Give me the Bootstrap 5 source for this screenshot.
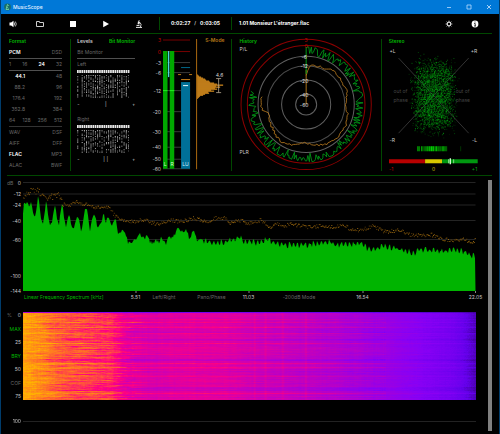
<!DOCTYPE html>
<html lang="en">
<head>
<meta charset="utf-8">
<meta name="viewport" content="width=device-width, initial-scale=1">
<title>MusicScope</title>
<link href="https://cdn.jsdelivr.net/npm/bootstrap@5.3.0/dist/css/bootstrap.min.css" rel="stylesheet">
<style>
  :root { --line: #004800; --on: #00b800; --dim: #686868; --soft: #c8c8c8; }
  body { background: #000; color: var(--soft); font: 5px/11px Inter, "Liberation Sans", sans-serif; }
  button { background: none; border: 0; padding: 0; color: inherit; font: inherit; line-height: inherit; }
  svg { display: block; }
  .window { border: 1px solid #003c6b; border-top: 0; min-height: 100vh; }
  .titlebar { background: #0078d7; height: 14px; color: #e4f2ff; }
  .titlebar h1 { font-size: 5px; line-height: 14px; font-weight: 500; }
  .titlebar button { width: 20px; height: 14px; }
  .app-icon { margin: 0 2px 0 3px; }
  .toolbar { height: 19px; color: #fff; font-weight: 700; padding: 0 11px 0 2px; }
  .tool { width: 33px; height: 19px; }
  .tool-first { width: 20px; }
  .tool-end { width: 26px; }
  .clock { width: 73px; height: 13px; border: solid var(--line); border-width: 0 1px; margin: 0 7px 0 4px; }
  .content { padding: 0 7px 8px 6px; }
  .panels { display: grid; grid-template-columns: 64fr 80fr 81fr 149fr 110fr; border: solid var(--line); border-width: 1px 0; }
  .panel { min-width: 0; padding-top: 1px; }
  .ruled { background: linear-gradient(var(--line), var(--line)) right 5px / 1px calc(100% - 9px) no-repeat; }
  .head { font: 600 5px/12px Inter, "Liberation Sans", sans-serif; margin: 0; }
  .on { color: var(--on); }
  .dim { color: var(--dim); }
  .bright { color: #fff; font-weight: 600; }
  .fmt { padding-left: 2px; padding-right: 9px; color: var(--dim); }
  .rule { border-bottom: 1px solid #505050; }
  .rule-2 { border-bottom: 1px solid #333; }
  .rate { width: 16px; }
  .levels { padding-left: 6px; padding-right: 16px; }
  .stack { display: grid; }
  .stack > * { grid-area: 1 / 1; }
  .over { z-index: 1; pointer-events: none; }
  .over button { pointer-events: auto; }
  .smode { padding-right: 8px; color: #b87818; line-height: 12px; }
  .hist { padding: 1px 7px 1px; }
  .stereo { padding: 1px 0 0 7px; }
  svg text { font-family: Inter, "Liberation Sans", sans-serif; font-size: 5px; fill: var(--soft); dominant-baseline: central; }
  svg .mid { text-anchor: middle; }
  svg .end { text-anchor: end; }
  .axis { display: grid; grid-template-columns: 100fr 23fr 34fr 61fr 13fr 88fr 39fr 81fr 25fr; margin-left: 17px; height: 11px; line-height: 8px; white-space: nowrap; }
  .axis > * { justify-self: center; align-self: start; }
  .axis > :first-child { justify-self: start; }
  .side { width: 16px; padding-right: 2px; }
  .side-list { line-height: 7px; }
  .gram { width: 100%; height: 88px; }
  .gram-gap { padding-right: 12px; }
  .foot-line { border-top: 1px solid #222; }
  .scroller { width: 4px; background: #808080; margin: 4px 0 -4px; }
</style>
<script src="https://cdn.jsdelivr.net/npm/bootstrap@5.3.0/dist/js/bootstrap.bundle.min.js"></script>
</head>
<body>
<div class="window d-flex flex-column">

  <header class="titlebar d-flex align-items-center">
    <svg class="app-icon flex-shrink-0" width="7" height="8" viewBox="0 0 7 8" aria-hidden="true"><circle cx="3.5" cy="4" r="3.4" fill="#176c6a"/><path d="M2 6.5 3.5 1.5 4.6 3M2.5 4l2 1.4M2 6.5h3" stroke="#7ce0a8" stroke-width=".8" fill="none"/></svg>
    <h1 class="m-0 me-auto">MusicScope</h1>
    <button type="button" aria-label="Minimize"><svg class="mx-auto" width="6" height="6" viewBox="0 0 6 6"><path d="M1 3.500h4" stroke="#b8dcff" stroke-width=".8"/></svg></button>
    <button type="button" aria-label="Maximize"><svg class="mx-auto" width="6" height="6" viewBox="0 0 6 6"><path d="M1 1h4v4H1z" fill="none" stroke="#b8dcff" stroke-width=".8"/></svg></button>
    <button type="button" aria-label="Close"><svg class="mx-auto" width="6" height="6" viewBox="0 0 6 6"><path d="m1 1 4 4m0-4L1 5" stroke="#d0e8ff" stroke-width=".8"/></svg></button>
  </header>

  <nav class="toolbar d-flex align-items-center">
    <button type="button" class="tool tool-first" aria-label="Volume"><svg class="mx-auto" width="8" height="8" viewBox="0 0 8 8"><path d="M.5 2.500h1.700L4.500.8v6.400L2.200 5.500H.5z" fill="#fff"/><path d="M5.200 2.400q1 1.600 0 3.200M6.300 1.500q2 2.500 0 5" stroke="#ddd" stroke-width=".8" fill="none"/></svg></button>
    <button type="button" class="tool" aria-label="Open"><svg class="mx-auto" width="8" height="8" viewBox="0 0 8 8"><path d="M.5 6.500v-5h3v1h4v4z" fill="none" stroke="#ccc"/></svg></button>
    <button type="button" class="tool" aria-label="Stop"><svg class="mx-auto" width="8" height="8" viewBox="0 0 8 8"><path d="M1 1h6v6H1z" fill="#fff"/></svg></button>
    <button type="button" class="tool" aria-label="Play"><svg class="mx-auto" width="8" height="8" viewBox="0 0 8 8"><path d="M1.200.8 7 4 1.200 7.200z" fill="#fff"/></svg></button>
    <button type="button" class="tool" aria-label="Analyze"><svg class="mx-auto" width="8" height="8" viewBox="0 0 8 8"><path d="M1 7.400h6M1.500 5.400h3" stroke="#eee" fill="none"/><path d="M4.600 2.200q2.600 1.600.8 5M4.200.2l-.5 1.500" stroke="#ddd" stroke-width=".9" fill="none"/><path d="m3 1.300 2 .6-.7 2.500-1.700-.5z" fill="#eee"/></svg></button>
    <div class="clock d-flex align-items-center justify-content-center gap-1">
      <span>0:02:27</span><span class="fw-normal">/</span><span>0:03:05</span>
    </div>
    <span class="me-auto text-nowrap">1.01 Monsieur L'étranger.flac</span>
    <button type="button" class="tool tool-end" aria-label="Settings"><svg class="mx-auto" width="8" height="8" viewBox="0 0 8 8"><circle cx="4" cy="4" r="1.800" fill="none" stroke="#ddd" stroke-width="1.200"/><path d="M4 .7v1M4 6.300v1M.7 4h1M6.300 4h1M1.700 1.700l.7.7M5.600 5.600l.7.7M6.300 1.700l-.7.7M2.400 5.600l-.7.7" stroke="#ddd"/></svg></button>
    <button type="button" class="tool tool-end" aria-label="Information"><svg class="mx-auto" width="8" height="8" viewBox="0 0 8 8"><circle cx="4" cy="4" r="3.400" fill="#fff"/><path d="M4 1.500v1M3.200 3.500H4.200v2.400M3.100 6h1.900" stroke="#000" stroke-width=".8" fill="none"/></svg></button>
  </nav>

  <main class="content flex-grow-1 d-flex flex-column">
    <div class="panels">

      <section class="panel ruled fmt">
        <h2 class="head on">Format</h2>
        <div class="d-flex justify-content-between rule"><button class="bright">PCM</button><button>DSD</button></div>
        <div class="d-flex justify-content-between rule"><span>1</span><span>16</span><span class="bright">24</span><span>32</span></div>
        <div class="d-flex justify-content-between"><span class="rate text-end bright">44.1</span><span>48</span></div>
        <div class="d-flex justify-content-between"><span class="rate text-end">88.2</span><span>96</span></div>
        <div class="d-flex justify-content-between"><span class="rate text-end">176.4</span><span>192</span></div>
        <div class="d-flex justify-content-between"><span class="rate text-end">352.8</span><span>384</span></div>
        <div class="d-flex justify-content-between rule-2"><span>64</span><span>128</span><span>256</span><span>512</span></div>
        <div class="d-flex justify-content-between"><button>WAV</button><button>DSF</button></div>
        <div class="d-flex justify-content-between"><button>AIFF</button><button>DFF</button></div>
        <div class="d-flex justify-content-between"><button class="bright">FLAC</button><button>MP3</button></div>
        <div class="d-flex justify-content-between"><button>ALAC</button><button>BWF</button></div>
      </section>

      <section class="panel levels">
        <div class="head d-flex justify-content-between"><button>Levels</button><button class="on">Bit Monitor</button></div>
        <div class="rule dim">Bit Monitor</div>
        <div class="dim">Left</div>
        <svg class="bits w-100" viewBox="0 0 58 29" data-seed="5"></svg>
        <div class="d-flex justify-content-between"><span>-</span><span>|</span><span>+</span></div>
        <div class="dim pt-1">Right</div>
        <svg class="bits w-100" viewBox="0 0 58 29" data-seed="9"></svg>
        <div class="d-flex justify-content-between"><span>-</span><span>| |</span><span>+</span></div>
      </section>

      <section class="panel ruled stack p-0">
        <svg id="meters" class="w-100" viewBox="151 34 81 141" role="img" aria-label="Level meters"></svg>
        <div class="over smode text-end"><button class="head">S-Mode</button></div>
      </section>

      <section class="panel ruled stack p-0">
        <svg id="history" class="w-100" viewBox="232 34 149 141" role="img" aria-label="Level history"></svg>
        <div class="over hist d-flex flex-column">
          <h2 class="head on">History</h2>
          <span class="lh-1">P/L</span>
          <span class="mt-auto mb-3">PLR</span>
        </div>
      </section>

      <section class="panel stack p-0">
        <svg id="stereo" class="w-100" viewBox="381 34 110 141" role="img" aria-label="Stereo meter"></svg>
        <h2 class="over head on stereo">Stereo</h2>
      </section>
    </div>

    <div class="d-flex flex-grow-1">
      <div class="flex-grow-1">
        <svg id="spectrum" class="w-100" viewBox="7 176 481 117" role="img" aria-label="Frequency spectrum"></svg>
        <div class="axis">
          <button class="on">Linear Frequency Spectrum [kHz]</button><span>5.51</span>
          <button class="dim">Left/Right</button><button class="dim">Pano/Phase</button><span>11.03</span>
          <button class="dim">-200dB Mode</button><span>16.54</span><span></span><span>22.05</span>
        </div>
        <div class="d-flex gram-gap mt-2">
          <div class="side side-list d-flex flex-column justify-content-between text-end">
            <div class="d-flex justify-content-between"><span class="dim">%</span><span>0</span></div>
            <button class="on text-end">MAX</button><span>25</span>
            <button class="on text-end">BRY</button><span>50</span>
            <button class="dim text-end">COF</button><span>75</span>
          </div>
          <div class="flex-grow-1"><canvas id="gram" class="gram d-block" width="452" height="88"></canvas></div>
        </div>
        <div class="d-flex gram-gap align-items-center pt-3">
          <div class="side text-end">100</div>
          <div class="flex-grow-1 foot-line"></div>
        </div>
      </div>
      <div class="scroller"></div>
    </div>
  </main>
</div>

<script>
function rng(seed) {
  return function () {
    seed = (seed * 1664525 + 1013904223) >>> 0;
    return seed / 4294967296;
  };
}
function lerp(points, x) {
  for (let i = 1; i < points.length; i++) {
    if (x <= points[i][0]) {
      const [x0, y0] = points[i - 1], [x1, y1] = points[i];
      return y0 + (y1 - y0) * (x - x0) / (x1 - x0);
    }
  }
  return points[points.length - 1][1];
}
const pairs = s => s.split(' ').map(p => p.split(',').map(Number));
const rect = (x, y, w, h, f) => `<rect x="${x}" y="${y}" width="${w}" height="${h}" fill="${f}"/>`;
const text = (x, y, t, cls = '', f = '') => `<text x="${x}" y="${y}" class="${cls}"${f ? ` style="fill:${f}"` : ''}>${t}</text>`;
const path = (d, s, w = 1) => `<path d="${d}" fill="none" stroke="${s}" stroke-width="${w}"/>`;

// Bit monitors
document.querySelectorAll('.bits').forEach(svg => {
  const r = rng(+svg.dataset.seed);
  let out = '';
  for (let c = 0; c < 24; c++) {
    out += rect(c * 2.2, 0, 1.7, 3, '#e8e8e8');
    if (c === 1) continue;
    const density = .4 + r() * .4;
    for (let y = 5; y < 27.5; y += 1.2) {
      if (r() < density) {
        const g = 90 + Math.floor(r() * 130);
        out += rect((c * 2.2 + .3).toFixed(1), y.toFixed(1), .9, 1, `rgb(${g},${g},${g})`);
      }
    }
  }
  svg.innerHTML = out;
});

// Level meters
(function () {
  let out = '';
  [['3', 40, '#b00'], ['0', 51.5, '#c00'], ['-3', 62.5], ['-6', 72.5], ['-12', 90.5], ['-20', 111.5], ['-30', 131.5], ['-40', 147], ['-50', 159], ['-60', 168.5]]
    .forEach(([t, y, f]) => {
      out += text(161, y, t, 'end', f);
      out += rect(163, y - .5, 27, 1, f ? '#700' : '#383838');
    });
  out += rect(163, 51, 4.5, 117.5, '#00a800') + rect(169.7, 51, 4.5, 117.5, '#00a800');
  out += rect(163, 90, 4.5, 1, '#20f020') + rect(169.7, 90, 4.5, 1, '#20f020');
  out += rect(168, 51, 1.2, 26, '#50d8e8');
  out += rect(181, 82, 9, 86.5, '#007098') + rect(181, 67, 9, 1, '#006888');
  out += rect(181, 79, 9, 1, '#c88018') + rect(178, 74, 3, 1, '#b87818') + rect(189, 74, 3, 1, '#b87818');
  out += rect(183, 85, 5, 1, '#e8f8ff');
  out += text(165.2, 164, 'L', 'mid', '#d8f8d8') + text(172, 164, 'R', 'mid', '#d8f8d8') + text(185.5, 164, 'LU', 'mid', '#d0ecf8');
  out += rect(196, 39, 1, 130, '#a86810');
  [1, 2, 4, 6, 8, 9, 12, 13, 17, 20, 26, 19, 23, 18, 20, 14, 17, 11, 12, 8, 6, 3, 2, 1]
    .forEach((w, i) => out += rect(197, 74.5 + i, w, 1.1, '#e89820'));
  out += path('M218.5 78.5v14M216 78.5h5M216 92.5h5', '#b8a890', .8) + text(219.5, 74.5, '4.6', 'mid', '#d8d8d8');
  document.getElementById('meters').innerHTML = out;
})();

// Polar history
(function () {
  const cx = 306, cy = 104.3, r = rng(31);
  let out = '';
  [[65, '#8c0000'], [58.7, '#8c0000'], [48, '#606060'], [38.6, '#4c4c4c'], [24.5, '#606060'], [10.5, '#606060']]
    .forEach(([rad, s]) => out += `<circle cx="${cx}" cy="${cy}" r="${rad}" fill="none" stroke="${s}"/>`);
  const at = (deg, rad) => {
    const a = deg * Math.PI / 180;
    return (cx + rad * Math.sin(a)).toFixed(1) + ' ' + (cy - rad * Math.cos(a)).toFixed(1);
  };
  const g = [], o = [];
  const avg = pairs('0,30 4,37 11,40 25,40 37,43 60,42 73,43 90,39 105,43 123,45 140,45 157,44 180,38 197,42 215,45 235,41 258,38 263,44 270,45 284,45');
  for (let d = 0; d <= 284; d += 1.3) g.push(at(d, 57.5 - Math.pow(r(), 1.6) * 9));
  for (let d = 0; d <= 282; d += 2.5) o.push(at(d, lerp(avg, d) + (r() - .5) * 2.2));
  out += path('M' + g.join('L'), '#00a018', .8) + path('M' + o.join('L'), '#c08020', .8);
  out += path('M306 104V70', '#a87018') + path('M306 74V47', '#009814');
  [['3', 40, '#b00'], ['0', 46, '#b00'], ['-6', 56.5], ['-12', 66], ['-20', 80.5], ['-40', 94.5], ['-60', 104.5]]
    .forEach(([t, y, f]) => out += text(f ? 306 : 304, y, t, 'mid', f || '#e0e0e0'));
  document.getElementById('history').innerHTML = out;
})();

// Stereo field
(function () {
  const r = rng(77);
  let out = path('M397.5 58 467.5 133M467.5 58 397.5 133', '#404040', .8);
  out += text(388.5, 51, '+L') + text(476, 51, '+R', 'end') + text(388.5, 139.5, '-R') + text(476, 139.5, '-L', 'end');
  out += text(392.5, 91, 'out of', '', '#444') + text(392.5, 100, 'phase', '', '#444');
  out += text(454.5, 91, 'out of', '', '#444') + text(454.5, 100, 'phase', '', '#444');
  for (let i = 0; i < 3000; i++) {
    const x = 432.5 + (r() - .5) * 32 + (r() + r() - 1) * 10;
    const y = 95 + (r() - .5) * 56 + (r() + r() - 1) * 16;
    out += rect(x.toFixed(1), y.toFixed(1), .9, .9, `rgba(0,${120 + Math.floor(r() * 90)},20,${(.2 + r() * .45).toFixed(2)})`);
  }
  for (let x = 416; x < 446; x += 1) {
    const k = 1 - Math.abs(x - 431) / 26;
    if (r() < .9) out += rect(x, 146, 1, 5, `rgb(0,${Math.floor(80 + r() * 160 * k)},0)`);
  }
  out += rect(459, 146, 1, 5, '#030');
  out += rect(388, 159, 36, 4, '#b80000') + rect(424, 159, 17, 4, '#d8c800') + rect(441, 159, 35.5, 4, '#009810');
  out += rect(447, 159, 1, 4, '#90e090') + rect(448.5, 158, 1.3, 6, '#e0ffe0') + rect(452, 159, 1, 4, '#80d880');
  out += text(388, 168.5, '-1', '', '#c80000') + text(432.5, 168.5, '0', 'mid', '#d0c000') + text(476, 168.5, '+1', 'end', '#00a810');
  document.getElementById('stereo').innerHTML = out;
})();

// Frequency spectrum
(function () {
  const r = rng(12);
  const level = pairs('69,120 72,87 78,92 82,82 88,100 94,80 98,115 106,130 112,85 115,60 119,100 124,140 129,148 134,118 139,75 143,115 149,154 156,145 161,110 166,88 170,130 177,152 182,110 187,86 192,130 198,160 203,135 208,118 214,155 221,166 227,140 232,126 238,140 244,178 250,135 255,106 262,106 266,145 270,172 274,145 280,122 287,128 292,163 300,150 306,140 311,114 317,150 322,126 328,135 335,157 341,143 347,132 354,180 362,176 368,165 376,178 384,205 388,195 395,208 405,195 421,180 430,195 442,187 450,202 458,210 465,195 475,205 485,190 497,208 505,192 512,188 520,190 532,162 542,170 550,180 557,168 568,192 580,172 590,195 605,200 640,210 680,203 720,192 735,205 750,203 760,208 780,208 800,198 830,213 860,215 900,217 950,210 990,205 1000,214 1050,215 1085,208 1105,228 1160,218 1183,225 1245,240 1255,228 1320,233 1370,230 1395,236 1410,248 1425,245');
  const peak = pairs('69,65 80,55 95,50 110,50 120,55 130,65 140,70 150,65 165,68 172,58 183,80 195,95 215,90 232,80 245,92 265,88 280,102 300,97 325,100 345,125 365,137 400,142 430,135 470,150 510,137 540,142 580,132 620,142 645,132 675,130 690,147 720,138 745,148 780,137 810,158 830,148 850,156 870,148 915,158 960,155 1000,158 1030,152 1060,170 1085,165 1120,155 1150,172 1200,168 1240,185 1290,180 1330,195 1370,200 1390,195 1415,207 1425,195');
  let out = '', area = 'M23 291', dots = '';
  [['0', 182.5], ['-12', 194], ['-24', 205], ['-40', 220.5], ['-60', 239.5], ['-100', 276], ['-144', 290.5]].forEach(([t, y], i) => {
    out += text(21, y, t, 'end');
    if (i < 5) out += rect(23, y - .5, 452.5, 1, '#242424');
  });
  out += text(7, 182.5, 'dB', '', '#686868');
  for (let x = 69, k = 0; x <= 1426; x += 3, k++) {
    const swing = x > 600 ? (Math.floor(k / 2) % 2 ? -1 : 1) * r() * 10 - 2 : (r() - .5) * (x > 380 ? 14 : 4);
    area += `L${(x / 3).toFixed(1)} ${(174 + (lerp(level, x) + swing) / 3).toFixed(1)}`;
  }
  area += 'L475.5 291z';
  for (let x = 69; x <= 1426; x += 2.5) {
    const spread = x < 200 ? 20 : 11;
    const y = 174 + (lerp(peak, x) + (r() - .5) * spread) / 3;
    dots += rect((x / 3).toFixed(1), y.toFixed(1), 1, .9, r() < .5 ? '#a06c10' : '#684408');
  }
  out += `<path d="${area}" fill="#00b400"/>` + dots;
  [135.5, 248.5, 362.5, 475].forEach(x => out += rect(x, 291, 1, 2, '#888'));
  document.getElementById('spectrum').innerHTML = out;
})();

// Spectrogram
(function () {
  const cv = document.getElementById('gram'), ctx = cv.getContext('2d');
  const W = cv.width, H = cv.height, img = ctx.createImageData(W, H), r = rng(2024);
  const palette = [[0, 60, 0, 140], [.12, 100, 0, 235], [.25, 136, 0, 245], [.45, 195, 0, 190], [.62, 255, 0, 130], [.78, 255, 95, 50], [1, 255, 180, 0]];
  const curve = [[0, .96], [.04, .9], [.07, .8], [.12, .74], [.195, .69], [.22, .57], [.28, .51], [.36, .54], [.44, .53], [.5, .49], [.65, .42], [.75, .35], [.85, .27], [.94, .19], [.97, .14], [1, .05]];
  const color = v => {
    v = Math.max(0, Math.min(1, v));
    for (let i = 1; i < palette.length; i++) {
      if (v <= palette[i][0]) {
        const a = palette[i - 1], b = palette[i], t = (v - a[0]) / (b[0] - a[0]);
        return [1, 2, 3].map(k => a[k] + (b[k] - a[k]) * t);
      }
    }
    return [255, 180, 0];
  };
  const column = Array.from({ length: W }, () => (r() - .5) * .025);
  [254, 265, 282, 305].forEach(x => { column[x - 23] += .05; column[x - 24] += .04; });
  const hot = { 7: 1, 10: 2, 15: 2, 21: 2, 22: 1, 31: 2, 42: 1, 51: 2, 55: 2, 56: 1, 64: 2, 70: 1, 80: 1, 81: 2, 84: 1 };
  const cold = { 20: 1, 27: 1, 28: 1, 47: 1, 48: 1, 59: 1, 75: 1, 76: 1, 77: 1, 78: 1 };
  for (let y = 0; y < H; y++) {
    const row = (r() - .5) * .05 + (hot[y] || 0) * .035 - (cold[y] || 0) * .06;
    let drift = 0;
    for (let x = 0; x < W; x++) {
      const u = x / W;
      const quiet = u > .8 ? .4 : 1;
      drift = drift * .9 + (r() - .5) * (u < .25 ? .06 : .02) * quiet;
      let v = lerp(curve, u) + row * (u < .05 ? .4 : quiet) + drift + column[x] * quiet + (r() - .5) * .02;
      if (y === 0) v *= .4;
      const c = color(v), p = (y * W + x) * 4;
      img.data[p] = c[0]; img.data[p + 1] = c[1]; img.data[p + 2] = c[2]; img.data[p + 3] = 255;
    }
  }
  ctx.putImageData(img, 0, 0);
})();
</script>
</body>
</html>
